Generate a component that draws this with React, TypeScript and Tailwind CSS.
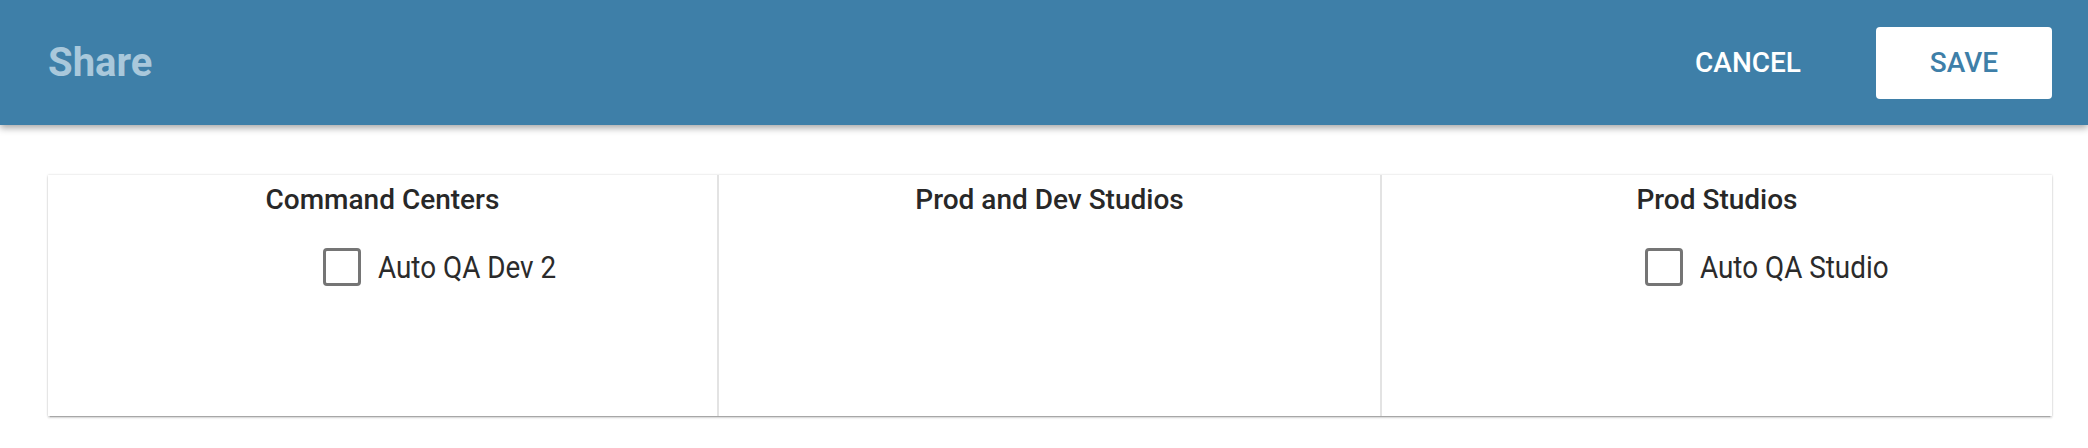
import React from 'react';

const columns = [
  { title: 'Command Centers', items: ['Auto QA Dev 2'], pad: 'pl-[275px]' },
  { title: 'Prod and Dev Studios', items: [], pad: 'pl-[260px]' },
  { title: 'Prod Studios', items: ['Auto QA Studio'], pad: 'pl-[263px]' },
];

const App = () => {
  return (
    <div className="w-full min-h-[448px] bg-white font-['Roboto',sans-serif]">
      {/* Top bar */}
      <header className="relative z-10 h-[125px] bg-[#3e7fa8] flex items-center pl-[48px] pr-[36px] shadow-[0_3px_7px_rgba(0,0,0,0.35)]">
        <h1 className="text-[40px] font-bold leading-none text-[#a9c8db]">Share</h1>
        <div className="ml-auto flex items-center">
          <button className="mr-[75px] text-[28px] font-medium leading-none text-white">CANCEL</button>
          <button className="w-[176px] h-[72px] rounded-[4px] bg-white text-[28px] font-medium leading-none text-[#3e7fa8]">
            SAVE
          </button>
        </div>
      </header>

      {/* Share targets */}
      <main className="pt-[50px] pl-[48px] pr-[36px]">
        <div className="grid grid-cols-[669px_663px_1fr] h-[241px] bg-white shadow-[0_0_2px_rgba(0,0,0,0.18),0_2px_2px_rgba(0,0,0,0.14),0_3px_1px_-2px_rgba(0,0,0,0.2)]">
          {columns.map((col, i) => (
            <div key={col.title} className={`pt-[7px] ${i > 0 ? 'border-l-2 border-[#e3e3e3]' : ''}`}>
              <h3 className="text-center text-[28px] font-medium leading-[36px] text-[#282828]">{col.title}</h3>
              {col.items.map((item) => (
                <label key={item} className={`mt-[29px] flex items-center ${col.pad}`}>
                  <span className="w-[38px] h-[38px] shrink-0 rounded-[4px] border-[3px] border-[#757575]" />
                  <span className="ml-[17px] inline-block origin-left scale-x-87 whitespace-nowrap text-[32px] leading-[40px] text-[#2b2b2b]">
                    {item}
                  </span>
                </label>
              ))}
            </div>
          ))}
        </div>
      </main>
    </div>
  );
};

export default App;
